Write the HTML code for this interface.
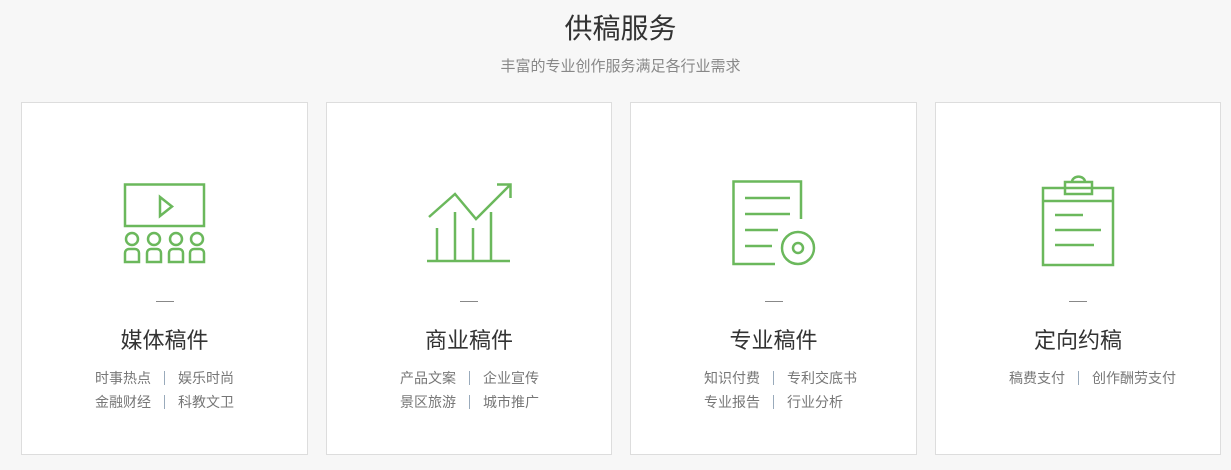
<!DOCTYPE html>
<html><head><meta charset="utf-8"><style>
*{margin:0;padding:0;box-sizing:border-box}
body{width:1231px;height:470px;background:#f7f7f7;font-family:"Liberation Sans","Noto Sans CJK SC",sans-serif;position:relative;overflow:hidden}
.h1{position:absolute;top:10px;left:0;width:1241px;text-align:center;font-size:28px;color:#333;line-height:38px}
.sub{position:absolute;top:57px;left:0;width:1241px;text-align:center;font-size:15px;color:#888;line-height:20px}
.card{position:absolute;top:102px;height:353px;background:#fff;border:1px solid #ddd}
.dash{position:absolute;top:198px;left:50%;margin-left:-9px;width:18px;height:1px;background:#888}
.t{position:absolute;top:224px;width:100%;text-align:center;font-size:22px;color:#333;line-height:28px}
.row{position:absolute;left:73px;height:24px;width:200px;font-size:14px;color:#777;line-height:24px;white-space:nowrap}
.row span{position:absolute;top:0}
.row .a{left:0}.row .b{left:83px}
.row .s{left:69px;top:5px;width:1px;height:14px;background:#9ab}
.r1{top:263px}.r2{top:287px}
svg{position:absolute;left:0;top:0}
</style></head><body>
<div class="h1">供稿服务</div>
<div class="sub">丰富的专业创作服务满足各行业需求</div>
<div class="card" style="left:21px;width:287px"><div class="dash"></div><div class="t">媒体稿件</div>
<div class="row r1"><span class="a">时事热点</span><span class="s"></span><span class="b">娱乐时尚</span></div>
<div class="row r2"><span class="a">金融财经</span><span class="s"></span><span class="b">科教文卫</span></div></div>
<div class="card" style="left:326px;width:286px"><div class="dash"></div><div class="t">商业稿件</div>
<div class="row r1"><span class="a">产品文案</span><span class="s"></span><span class="b">企业宣传</span></div>
<div class="row r2"><span class="a">景区旅游</span><span class="s"></span><span class="b">城市推广</span></div></div>
<div class="card" style="left:630px;width:287px"><div class="dash"></div><div class="t">专业稿件</div>
<div class="row r1"><span class="a">知识付费</span><span class="s"></span><span class="b">专利交底书</span></div>
<div class="row r2"><span class="a">专业报告</span><span class="s"></span><span class="b">行业分析</span></div></div>
<div class="card" style="left:935px;width:286px"><div class="dash"></div><div class="t">定向约稿</div>
<div class="row r1"><span class="a">稿费支付</span><span class="s"></span><span class="b">创作酬劳支付</span></div></div>
<svg width="1231" height="470" fill="none" stroke="#6bb85c" stroke-width="2.5">
<rect x="125" y="184.5" width="79" height="41.5"/>
<path d="M160 197L172 206.5L160 216Z"/>
<circle cx="132" cy="239" r="6"/><circle cx="154" cy="239" r="6"/><circle cx="176" cy="239" r="6"/><circle cx="197" cy="239" r="6"/>
<path d="M125 262V253a4 4 0 0 1 4-4h6a4 4 0 0 1 4 4v9ZM147 262V253a4 4 0 0 1 4-4h6a4 4 0 0 1 4 4v9ZM169 262V253a4 4 0 0 1 4-4h6a4 4 0 0 1 4 4v9ZM190 262V253a4 4 0 0 1 4-4h6a4 4 0 0 1 4 4v9Z"/>
<path d="M427 261H510M437 261V228M455 261V212M473 261V228M491 261V212"/>
<path d="M429 217L455 194L476 219L510 185M497 184.5H510.5V198"/>
<path d="M801 219V181.5H733.5V264H775"/>
<path d="M745 198H790M745 214H790M745 230H778M745 246H772"/>
<circle cx="798" cy="248" r="16"/><circle cx="798" cy="248" r="5"/>
<rect x="1043" y="188" width="70" height="77"/>
<path d="M1043 201H1113M1055 215H1083M1055 230H1101M1055 245H1094"/>
<rect x="1065" y="182" width="27" height="12"/>
<path d="M1072 182a6 5 0 0 1 13 0"/>
</svg>
</body></html>
